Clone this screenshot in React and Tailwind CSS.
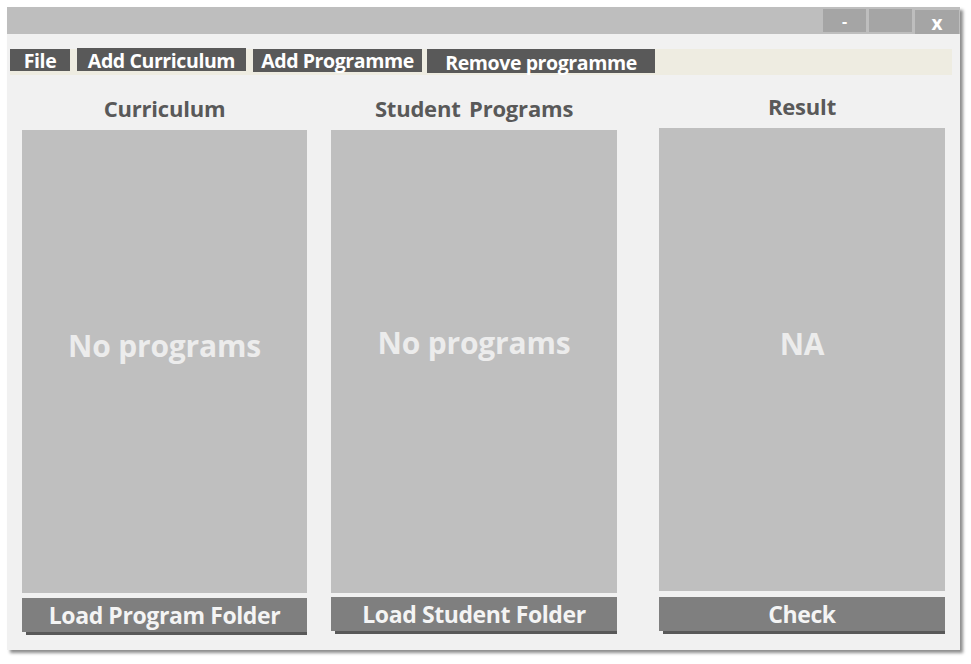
const font = { fontFamily: '"Open Sans", "Noto Sans", sans-serif' };

function MenuButton({ label, className = '' }) {
  return (
    <button
      type="button"
      className={`bg-[#595959] text-white font-bold text-[19.5px] leading-none tracking-[-0.4px] ${className}`}
    >
      {label}
    </button>
  );
}

function Column({ title, empty, action, className = '', emptyPad = 'pb-[32px]', btnGap = 'mt-[5px]' }) {
  return (
    <div className={`flex flex-col ${className}`}>
      <h2 className="h-[41px] pb-[2px] flex items-center justify-center text-[22px] font-bold text-[#595959] tracking-[-0.2px] [word-spacing:3px]">
        {title}
      </h2>
      <div className={`h-[463px] bg-[#bfbfbf] flex items-center justify-center ${emptyPad}`}>
        <span className="text-[30px] font-bold text-[#ececec] tracking-[-0.2px]">{empty}</span>
      </div>
      <button
        type="button"
        className={`${btnGap} h-[34px] bg-[#7f7f7f] text-[#f4f4f4] text-[23px] font-bold tracking-[-0.4px] shadow-[2px_5px_0_-2px_#595959]`}
      >
        {action}
      </button>
    </div>
  );
}

export default function App() {
  return (
    <div className="min-h-screen bg-white pt-[7px] pl-[7px]" style={font}>
      <div className="w-[953px] h-[643px] bg-[#f1f1f1] shadow-[3px_3px_3px_rgba(0,0,0,0.45)] flex flex-col">
        <div className="h-[27px] bg-[#bebebe] flex justify-end items-start pr-[1px]">
          <button type="button" className="mt-[2px] w-[43px] h-[23px] bg-[#a5a5a5] text-white font-bold text-[16px] leading-none">
            -
          </button>
          <button type="button" className="mt-[2px] ml-[3px] w-[43px] h-[23px] bg-[#a5a5a5]" />
          <button type="button" className="mt-[3px] ml-[3px] w-[44px] h-[24px] bg-[#a5a5a5] text-white font-bold text-[19px] leading-none pt-[3px]">
            x
          </button>
        </div>

        <div className="mt-[15px] ml-[3px] mr-[8px] h-[26px] bg-[#eeece1] flex items-start">
          <MenuButton label="File" className="w-[60px] h-[22px] pt-[2px]" />
          <MenuButton label="Add Curriculum" className="ml-[7px] w-[169px] h-[23px] -mt-[1px] pt-[2px]" />
          <MenuButton label="Add Programme" className="ml-[7px] w-[169px] h-[23px] pt-[1px]" />
          <MenuButton label="Remove programme" className="ml-[5px] w-[228px] h-[24px] pt-[4px]" />
        </div>

        <div className="flex pl-[15px] mt-[14px]">
          <Column title="Curriculum" empty="No programs" action="Load Program Folder" className="w-[285px]" />
          <Column title="Student Programs" empty="No programs" action="Load Student Folder" className="w-[286px] ml-[24px]" emptyPad="pb-[38px]" btnGap="mt-[4px]" />
          <Column title="Result" empty="NA" action="Check" className="w-[286px] ml-[42px] -mt-[2px]" btnGap="mt-[6px]" />
        </div>
      </div>
    </div>
  );
}
